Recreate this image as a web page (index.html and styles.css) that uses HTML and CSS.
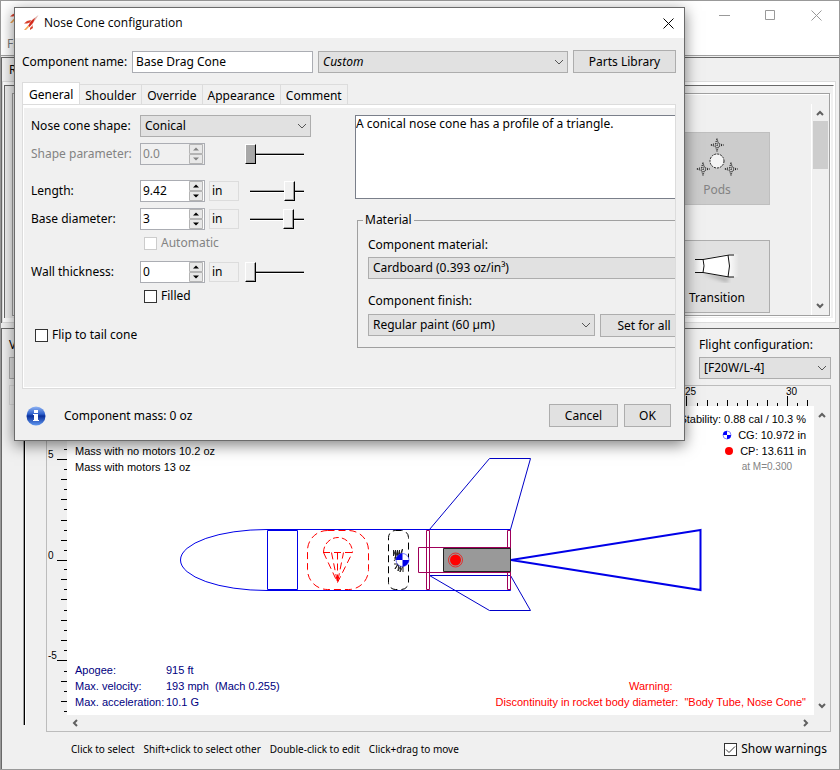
FILE: index.html
```html
<!DOCTYPE html>
<html lang="en">
<head>
<meta charset="utf-8">
<title>OpenRocket</title>
<link rel="stylesheet" href="styles.css">
</head>
<body>
<svg class="defs" aria-hidden="true">
  <defs>
    <symbol id="rocket" viewBox="0 0 16 16">
      <path d="M15.500 0 10 4 8 7l2 1 3-4z" fill="#dfb0aa"/>
      <path d="M12 3 8 6 5 11l1.500 1L10 8z" fill="#d42a1c"/>
      <path d="M8 5 4 6 1 8.500l3 0 3-1zM9 9l0 2-2 2 0 2 3-2z" fill="#d8402c"/>
      <path d="m5 10.500-4 4.500 2 0 3-3z" fill="#f3a552"/>
    </symbol>
    <symbol id="chev-up" viewBox="0 0 8 6"><path d="M1 5 4 2l3 3" fill="none" stroke="#606060" stroke-width="2"/></symbol>
    <symbol id="close" viewBox="0 0 11 11"><path d="M.5.5l10 10M10.500.5l-10 10" fill="none" stroke="currentColor"/></symbol>
    <symbol id="spin" viewBox="0 0 14 20">
      <path d="M.5.5h13v9H.5zM.5 10.500h13v9H.5z" fill="#e8e8e8" stroke="#b4b4b4"/>
      <path d="M4 6.500 7 3.500l3 3zM4 13.500h6l-3 3z" fill="currentColor"/>
    </symbol>
    <symbol id="pod" viewBox="0 0 14 14"><path d="M7 .5 8.500 5.500 13.500 7 8.500 8.500 7 13.500 5.500 8.500.5 7 5.500 5.500z" fill="none" stroke="#111" stroke-dasharray="1 1"/><path d="M7 3v8M3 7h8" stroke="#333" stroke-dasharray="1 1"/></symbol>
  </defs>
</svg>

<main class="window">
  <header class="titlebar">
    <svg class="icon16" aria-hidden="true"><use href="#rocket"/></svg>
    <div class="controls">
      <button aria-label="Minimize"><svg width="11" height="11"><path d="M0 5.500h11" stroke="currentColor"/></svg></button>
      <button aria-label="Maximize"><svg width="11" height="11"><path d="M.5.5h9v9h-9z" fill="none" stroke="currentColor"/></svg></button>
      <button aria-label="Close"><svg width="11" height="11"><use href="#close"/></svg></button>
    </div>
  </header>
  <nav class="menubar"><a href="#file">File</a></nav>

  <section class="design">
    <div class="design-tab">Rocket design</div>
    <div class="design-body">
      <div class="pane">
        <div class="palette">
          <div class="parts">
            <button class="part" disabled>
              <svg width="42" height="42"><circle cx="21" cy="23" r="7" fill="#f4f4f4" stroke="#222" stroke-dasharray="2 1"/><use href="#pod" x="14" y="0" width="14" height="14"/><use href="#pod" x="0" y="24" width="14" height="14"/><use href="#pod" x="28" y="24" width="14" height="14"/></svg>
              <span>Pods</span>
            </button>
            <button class="part">
              <svg width="46" height="42">
                <defs><linearGradient id="body"><stop offset="0" stop-color="#fff" stop-opacity="0"/><stop offset=".2" stop-color="#fff"/><stop offset=".75" stop-color="#fff"/><stop offset="1" stop-color="#fff" stop-opacity="0"/></linearGradient><filter id="soft"><feGaussianBlur stdDeviation="2"/></filter></defs>
                <path d="M9 27 34 32v4L16 30z" fill="#999" filter="url(#soft)"/>
                <path d="M0 13h9L35 8h10v23H35L9 27H0z" fill="url(#body)"/>
                <path d="M1 13.500h8l26-4.500h5M1 26.500h8L35 31h5M9 13q2 7 0 13.500M34 9q3 11 0 22" fill="none" stroke="#111"/>
              </svg>
              <span>Transition</span>
            </button>
          </div>
          <div class="vscroll">
            <svg width="8" height="6"><use href="#chev-up"/></svg>
            <div class="thumb"></div>
            <svg class="flip" width="8" height="6"><use href="#chev-up"/></svg>
          </div>
        </div>
      </div>
    </div>
  </section>

  <section class="view">
    <div class="viewbar">
      <div class="field"><label for="viewtype">View Type:</label><select id="viewtype"><option>Side view</option></select></div>
      <div class="field flight"><label for="flight">Flight configuration:</label><select id="flight"><option>[F20W/L-4]</option></select></div>
    </div>
    <div class="stage">
      <div class="rotate"><div class="zoomunit"></div><div class="rail"></div></div>
      <div class="figure">
        <svg class="ruler-top" viewBox="67 386 747 20" preserveAspectRatio="xMinYMin">
          <path d="M686.500 396v10M697.500 403v3M707.500 400v6M717.500 403v3M727.500 400v6M737.500 403v3M747.500 400v6M757.500 403v3M767.500 400v6M777.500 403v3M787.500 396v10M797.500 403v3M807.500 400v6" stroke="#000"/>
          <text x="685" y="395">25</text><text x="786" y="395">30</text>
        </svg>
        <svg class="ruler-left" viewBox="47 406 20 308" preserveAspectRatio="xMinYMin">
          <path d="M64 449.500h3M57 459.500h10M64 469.500h3M61 479.500h6M64 489.500h3M61 499.500h6M64 509.500h3M61 520.500h6M64 530.500h3M61 540.500h6M64 550.500h3M57 560.500h10M64 569.500h3M61 579.500h6M64 589.500h3M61 599.500h6M64 610.500h3M61 620.500h6M64 630.500h3M61 640.500h6M64 650.500h3M57 660.500h10M64 671.500h3M61 681.500h6M64 691.500h3M61 701.500h6M64 711.500h3" stroke="#000"/>
          <text x="48" y="458">5</text><text x="48" y="559">0</text><text x="48" y="659">-5</text>
        </svg>
        <div class="canvas">
          <svg class="drawing" viewBox="67 406 747 308" preserveAspectRatio="xMinYMin" role="img" aria-label="Rocket side view">
            <g fill="none" stroke="#0000e8">
              <path d="M267 529.500H510.500V590.500H267A86.500 30.500 0 0 1 267 529.500"/>
              <path d="M267.500 530.500h30v59h-30z"/>
              <path d="M429.500 529.500 489.500 458.500h41l-20 71M429.500 575.500h81l20 35h-41z" stroke="#0000c8"/>
              <path d="M700.500 530 511 560l189.500 30z" stroke-width="2"/>
            </g>
            <path d="M426.500 530.500h3v59h-3zM507.500 530.500h3v59h-3zM418.500 547.500h92v25h-92z" fill="none" stroke="#a0005a"/>
            <path d="M443.500 548.500h67v23h-67z" fill="#999" stroke="#222"/>
            <g fill="none" stroke="red" stroke-dasharray="7 4">
              <rect x="307.500" y="530.500" width="61" height="59" rx="20"/>
              <path d="M323.500 552.500A14.500 15 0 0 1 352.500 552.500" stroke-dasharray="6 3"/>
              <path d="M323 552.500h30M323.500 552.500l14 30 15-30M331.500 552.500l6 30 6-30M337.500 552.500v30"/>
            </g>
            <rect x="388.500" y="530.500" width="20" height="59" rx="7" fill="none" stroke="#000" stroke-dasharray="7 4"/>
            <path d="M393.500 550v6l2-6v8l2-8v8l2-8v7l3-8-2 10M394 561l3-4v5l3-2-5 9 4-6-1 8 3-6-1 7 3-6v6M394 564h6M394 558h8" fill="none" stroke="#222"/>
            <circle cx="402.500" cy="560" r="6.500" fill="#fff" stroke="#00f" stroke-width=".5"/>
            <path d="M402.500 560V553.500a6.500 6.500 0 0 0-6.500 6.500zM402.500 560v6.500a6.500 6.500 0 0 0 6.500-6.500z" fill="#0000e8"/>
            <circle cx="455.500" cy="560" r="5.500" fill="red"/><circle cx="455.500" cy="560" r="7" fill="none" stroke="red" stroke-width=".7"/>
          </svg>
          <div class="info">
            <p>Length 20.5 in, max. diameter 3 in</p><p>Mass with no motors 10.2 oz</p><p>Mass with motors 13 oz</p>
          </div>
          <div class="stability">
            <p>Stability: 0.88 cal / 10.3 %</p>
            <p><svg width="10" height="10"><circle cx="5" cy="5" r="4" fill="#fff" stroke="#88f"/><path d="M5 5V1a4 4 0 0 0-4 4zM5 5v4a4 4 0 0 0 4-4z" fill="#00f"/></svg>CG: 10.972 in</p>
            <p><svg width="10" height="10"><circle cx="5" cy="5" r="4" fill="red"/></svg>CP: 13.611 in</p>
            <p class="mach">at M=0.300</p>
          </div>
          <dl class="flightdata">
            <dt>Apogee:</dt><dd>915 ft</dd>
            <dt>Max. velocity:</dt><dd>193 mph&nbsp; (Mach 0.255)</dd>
            <dt>Max. acceleration:</dt><dd>10.1 G</dd>
          </dl>
          <div class="warning"><p>Warning:</p><p>Discontinuity in rocket body diameter:&nbsp; "Body Tube, Nose Cone"</p></div>
        </div>
        <div class="vbar"><svg width="8" height="6"><use href="#chev-up"/></svg><svg class="flip" width="8" height="6"><use href="#chev-up"/></svg></div>
        <div class="hbar"><svg class="left" width="8" height="6"><use href="#chev-up"/></svg><svg class="right" width="8" height="6"><use href="#chev-up"/></svg></div>
      </div>
    </div>
    <footer class="hints">
      <span>Click to select</span><span>Shift+click to select other</span><span>Double-click to edit</span><span>Click+drag to move</span>
      <label class="check"><input type="checkbox" checked>Show warnings</label>
    </footer>
  </section>
</main>

<div class="dialog" role="dialog" aria-labelledby="dlg-title">
  <header class="dialog-title">
    <svg class="icon16" aria-hidden="true"><use href="#rocket"/></svg>
    <h1 id="dlg-title">Nose Cone configuration</h1>
    <button aria-label="Close"><svg width="11" height="11"><use href="#close"/></svg></button>
  </header>
  <div class="namebar">
    <label for="cname">Component name:</label>
    <input id="cname" class="text" type="text" value="Base Drag Cone">
    <select class="preset" aria-label="Preset"><option>Custom</option></select>
    <button class="btn">Parts Library</button>
  </div>
  <div class="tabs" role="tablist">
    <button role="tab" class="tab selected" aria-selected="true">General</button><button role="tab" class="tab">Shoulder</button><button role="tab" class="tab">Override</button><button role="tab" class="tab">Appearance</button><button role="tab" class="tab">Comment</button>
  </div>
  <div class="panel">
    <div class="form">
      <label for="shape">Nose cone shape:</label>
      <select id="shape" class="wide"><option>Conical</option></select>

      <label for="param" class="off">Shape parameter:</label>
      <div class="spinner off"><input id="param" type="text" value="0.0" disabled><svg width="14" height="20"><use href="#spin"/></svg></div>
      <input class="slider" type="range" min="0" max="100" value="0" disabled aria-label="Shape parameter slider">

      <label for="len" class="group">Length:</label>
      <div class="spinner group"><input id="len" type="text" value="9.42"><svg width="14" height="20"><use href="#spin"/></svg></div>
      <button class="unit group">in</button>
      <input class="slider group" type="range" min="0" max="100" value="74" aria-label="Length slider">

      <label for="dia">Base diameter:</label>
      <div class="spinner"><input id="dia" type="text" value="3"><svg width="14" height="20"><use href="#spin"/></svg></div>
      <button class="unit">in</button>
      <input class="slider" type="range" min="0" max="100" value="72" aria-label="Base diameter slider">
      <label class="check sub off"><input type="checkbox" disabled>Automatic</label>

      <label for="wall" class="gap">Wall thickness:</label>
      <div class="spinner gap"><input id="wall" type="text" value="0"><svg width="14" height="20"><use href="#spin"/></svg></div>
      <button class="unit gap">in</button>
      <input class="slider gap" type="range" min="0" max="100" value="0" aria-label="Wall thickness slider">
      <label class="check sub"><input type="checkbox">Filled</label>

      <label class="check tail"><input type="checkbox">Flip to tail cone</label>
    </div>
    <div class="side">
      <textarea class="desc" aria-label="Description" readonly>A conical nose cone has a profile of a triangle.</textarea>
      <fieldset class="material">
        <legend>Material</legend>
        <label for="mat">Component material:</label>
        <select id="mat"><option>Cardboard (0.393 oz/in³)</option></select>
        <label for="fin">Component finish:</label>
        <div class="finish"><select id="fin"><option>Regular paint (60 µm)</option></select><button class="btn">Set for all</button></div>
      </fieldset>
    </div>
  </div>
  <footer class="actions">
    <svg width="20" height="20" aria-hidden="true">
      <defs><linearGradient id="ball" x2="0" y2="1"><stop offset="0" stop-color="#8fb4f4"/><stop offset=".4" stop-color="#2d5fcb"/><stop offset=".5" stop-color="#0a2f9a"/><stop offset="1" stop-color="#5f97f0"/></linearGradient></defs>
      <circle cx="10" cy="10" r="9.500" fill="url(#ball)"/><path d="M8 4h4v3H8zM7 8h5v6h1v1H7v-1h1V9H7z" fill="#fff"/>
    </svg>
    <span class="mass">Component mass: 0 oz</span>
    <button class="btn cancel">Cancel</button>
    <button class="btn ok">OK</button>
  </footer>
</div>
</body>
</html>
```
FILE: styles.css
```css
* { box-sizing: border-box; margin: 0; padding: 0; }

body {
  position: relative;
  min-height: 100vh;
  background: #f0f0f0;
  color: #000;
  font: 12px/16px "Noto Sans", sans-serif;
  overflow: hidden;
}

button, input, select, textarea { font: inherit; color: inherit; border-radius: 0; }
button { background: none; border: 0; }
svg { display: block; flex: none; }
.defs { position: absolute; width: 0; height: 0; }
.icon16 { width: 16px; height: 16px; }
.flip { transform: rotate(180deg); }
.left { transform: rotate(-90deg); }
.right { transform: rotate(90deg); }

select {
  appearance: none;
  height: 22px;
  padding: 0 20px 0 4px;
  border: 1px solid #adadad;
  background: #e1e1e1 url("data:image/svg+xml,%3Csvg xmlns='http://www.w3.org/2000/svg' width='10' height='6'%3E%3Cpath d='M1 1l4 4 4-4' fill='none' stroke='%23555'/%3E%3C/svg%3E") no-repeat right 3px center;
}
.btn { height: 23px; border: 1px solid #adadad; background: #e1e1e1; white-space: nowrap; }

/* main window */
.window {
  display: flex;
  flex-direction: column;
  min-height: 100vh;
  border: 1px solid #999;
}
.titlebar { display: flex; justify-content: space-between; align-items: center; height: 29px; padding-left: 8px; background: #fff; }
.controls { display: flex; color: #999; }
.controls button { display: grid; place-items: center; width: 46px; height: 29px; }
.menubar { height: 26px; padding: 6px 6px 0; background: #fff; border-bottom: 1px solid #a0a0a0; }
.menubar a { color: #777; text-decoration: none; }

.design {
  margin-top: 1px;
  padding-right: 3px;
  border-top: 1px solid #696969;
  border-left: 1px solid #696969;
}
.design-tab { width: 100px; height: 23px; padding: 4px 7px; background: #f4f4f4; white-space: nowrap; }
.design-body {
  padding: 3px 1px 4px;
  border: 1px solid #dcdcdc;
  background: #fff;
}
.pane {
  padding: 7px 3px 2px 7px;
  border: 1px solid #fff;
  border-top-color: #696969;
  border-left-color: #696969;
  border-bottom: 0;
  background: #f0f0f0;
}
.palette {
  display: flex;
  justify-content: flex-end;
  height: 223px;
  padding: 10px 1px 0 0;
  border: 1px solid #a0a0a0;
  box-shadow: inset 1px 1px #fff, 1px 1px #fff;
}
.parts { display: grid; align-content: start; gap: 35px; padding: 28px 41px 0 0; }
.part {
  display: flex;
  flex-direction: column;
  align-items: center;
  width: 106px;
  height: 73px;
  padding-top: 5px;
  border: 1px solid #adadad;
  background: #e1e1e1;
}
.part span { margin-top: 2px; }
.part:disabled { background: #ccc; border-color: #bfbfbf; color: #838383; }
.vscroll { display: flex; flex-direction: column; align-items: center; width: 17px; padding: 6px 0; border-left: 1px solid #fff; }
.vscroll .thumb { width: 15px; height: 48px; margin: 5px 0 auto; background: #cdcdcd; }

.view {
  flex: 1;
  display: flex;
  flex-direction: column;
  margin-top: 5px;
  padding: 8px 8px 10px 7px;
  border-top: 1px solid #696969;
  border-left: 1px solid #696969;
}
.viewbar { display: flex; justify-content: space-between; }
.field { display: grid; gap: 4px; width: 132px; }
.stage { flex: 1; display: flex; margin-top: 6px; }
.rotate { width: 37px; }
.zoomunit { width: 30px; height: 20px; border: 1px solid #ddd; }
.rail { width: 3px; height: 320px; margin-left: 14px; background: #000; border-left: 1px solid #a0a0a0; border-right: 1px solid #fff; }
.figure {
  flex: 1;
  display: grid;
  grid-template-columns: 20px 1fr 16px;
  grid-template-rows: 20px 1fr 16px;
  border: 1px solid #bcbcbc;
  font: 11px/16px "Liberation Sans", sans-serif;
}
.figure text { font-size: 10px; }
.ruler-top { grid-area: 1 / 2; width: 100%; height: 20px; }
.ruler-left { grid-area: 2 / 1; width: 20px; height: 100%; }
.canvas {
  position: relative;
  grid-area: 2 / 2;
  display: grid;
  grid-template-columns: 1fr auto;
  align-content: space-between;
  padding: 5px 8px;
  background: #fff;
}
.canvas > * { position: relative; }
.canvas > .drawing { position: absolute; inset: 0; width: 100%; height: 100%; }
.info { padding-top: 16px; }
.stability { text-align: right; }
.stability p { display: flex; justify-content: flex-end; align-items: center; gap: 6px; }
.stability .mach { padding-right: 14px; font-size: 10px; color: #838383; }
.flightdata { display: grid; grid-template-columns: 91px auto; justify-content: start; color: #000080; white-space: nowrap; }
.warning { align-self: end; color: red; text-align: center; }
.vbar { grid-area: 2 / 3; display: flex; flex-direction: column; justify-content: space-between; align-items: center; padding: 6px 0; }
.hbar { grid-area: 3 / 2; display: flex; justify-content: space-between; align-items: center; padding: 0 4px; }

.hints { display: flex; align-items: center; gap: 9px; height: 20px; margin-top: 7px; padding-left: 62px; font-size: 10px; }
.hints .check { margin-left: auto; padding-right: 4px; font-size: 12px; }

.check { display: flex; align-items: center; gap: 4px; }
.check input {
  appearance: none;
  width: 13px;
  height: 13px;
  border: 1px solid #333;
  background: #fff;
}
.check input:checked { background: #fff url("data:image/svg+xml,%3Csvg xmlns='http://www.w3.org/2000/svg' width='11' height='11'%3E%3Cpath d='M1 5.500l3 3 6-6' fill='none' stroke='%23333'/%3E%3C/svg%3E"); }
.check input:disabled { border-color: #ccc; }
.off { color: #838383; }

/* dialog */
.dialog {
  position: absolute;
  left: 14px;
  right: 155px;
  top: 7px;
  border: 1px solid #6b6b6b;
  background: #f0f0f0;
  box-shadow: 0 4px 14px rgba(0, 0, 0, .5);
}
.dialog-title { display: flex; align-items: center; height: 30px; padding: 0 10px 0 8px; background: #fff; }
.dialog-title h1 { flex: 1; margin-left: 5px; font: 12px/16px "Open Sans", sans-serif; }
.namebar { display: flex; align-items: center; gap: 5px; padding: 12px 8px 0 7px; }
.namebar .text { width: 181px; height: 22px; padding: 0 3px; border: 1px solid #abadb3; background: #fff; }
.preset { flex: 1; font-style: italic; }
.namebar .btn { width: 103px; }

.tabs { display: flex; align-items: flex-end; height: 31px; padding: 0 7px; }
.tab { height: 20px; padding: 3px 5px 0; line-height: 16px; border: 1px solid #dcdcdc; border-width: 1px 1px 0 0; }
.tab.selected { height: 22px; padding: 2px 6px 0; border-left-width: 1px; background: #fff; }
.panel {
  display: flex;
  justify-content: space-between;
  height: 285px;
  margin: 0 8px 0 7px;
  padding: 7px 0 0 8px;
  border: 1px solid #dcdcdc;
  box-shadow: inset 1px 3px #fff, inset 0 -1px #fff;
  overflow: hidden;
}
.form {
  display: grid;
  grid-template-columns: 105px 65px 30px 64px;
  align-content: start;
  align-items: center;
  column-gap: 4px;
  row-gap: 6px;
  padding-top: 3px;
}
.wide { grid-column: 2 / 5; width: 171px; }
.group { margin-top: 9px; }
.gap { margin-top: 5px; }
.sub { grid-column: 2 / 5; height: 14px; margin-left: 4px; }
.tail { grid-column: 1 / 5; margin: 18px 0 0 4px; }
.spinner { display: flex; align-items: center; height: 22px; border: 1px solid #abadb3; background: #fff; padding-right: 1px; }
.spinner input { flex: 1; min-width: 0; width: 0; padding-left: 2px; border: 0; background: none; }
.spinner.off { background: #f0f0f0; }
.unit { height: 20px; padding-left: 2px; border: 1px solid #dcdcdc; text-align: left; }
.slider {
  grid-column: 4;
  appearance: none;
  width: 64px;
  height: 20px;
  margin-left: 2px;
  background: linear-gradient(#a0a0a0 0 1px, #000 1px 2px, #fff 2px 3px) no-repeat 5px 9px / 54px 3px;
}
.slider::-webkit-slider-thumb {
  appearance: none;
  width: 11px;
  height: 20px;
  background: #f0f0f0;
  border: 1px solid #000;
  border-color: #fff #000 #000 #fff;
  box-shadow: inset -1px -1px #a0a0a0;
}
.slider:disabled::-webkit-slider-thumb { background: #a8a8a8; }

.side { flex: none; width: 320px; padding-top: 3px; }
.desc { display: block; width: 340px; height: 84px; border: 1px solid #7a7f8a; background: #fff; resize: none; overflow: hidden; }
.material {
  display: grid;
  width: 340px;
  margin: 13px 0 0 2px;
  padding: 9px 10px 10px;
  border: 1px solid #a0a0a0;
}
.material legend { padding: 0 2px; margin-left: -5px; }
.material > select { width: 322px; margin: 4px 0 14px; }
.finish { display: flex; gap: 5px; margin-top: 5px; }
.finish select { width: 227px; }
.finish .btn { width: 88px; }

.actions { display: flex; align-items: center; gap: 6px; height: 51px; padding: 2px 13px 0 11px; }
.mass { flex: 1; padding-left: 12px; }
.cancel { width: 69px; }
.ok { width: 47px; }
```
